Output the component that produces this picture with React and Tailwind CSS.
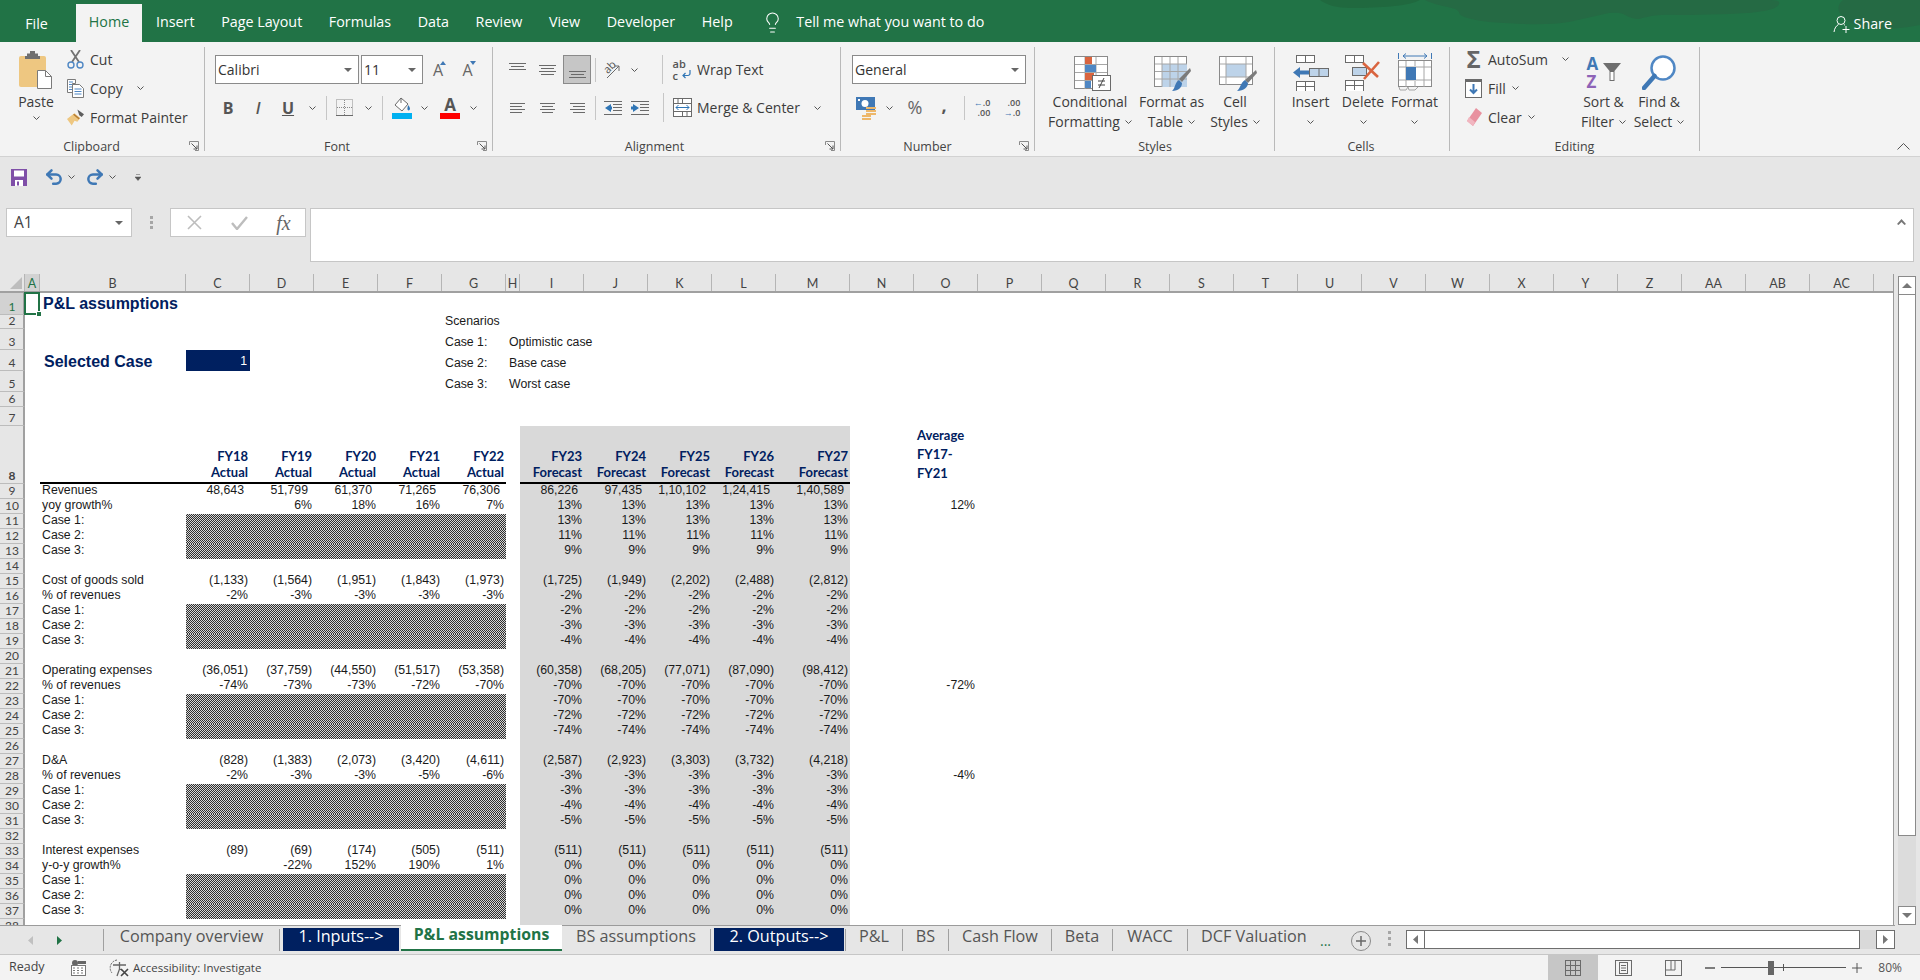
import React from "react";
import { Lightbulb, Undo2, Redo2 } from "lucide-react";

const Chev = ({ c = "#555" }) => (
  <svg width="7" height="4" viewBox="0 0 7 4" className="shrink-0"><path d="M.5.5l3 3 3-3" fill="none" stroke={c} /></svg>
);
const Launcher = () => (
  <svg width="10" height="10" viewBox="0 0 10 10" className="absolute right-[5px] bottom-[0px]">
    <path d="M.5 4V.5H9.5V9.5H6" fill="none" stroke="#8a8a8a" />
    <path d="M2.5 2.5L8 8M8 4.5V8H4.5" fill="none" stroke="#555" />
  </svg>
);
const Lines = ({ rows, w = 17, h = 14 }) => (
  <svg width={w} height={h} viewBox={`0 0 ${w} ${h}`}>
    {rows.map(([x1, x2, y], i) => (<path key={i} d={`M${x1} ${y + 0.5}H${x2}`} stroke="#6a6a6a" />))}
  </svg>
);
const Slot = ({ w, children }) => <div className={`flex items-center justify-center h-full shrink-0 ${w}`}>{children}</div>;
const VSep = () => <div className="w-px h-[24px] bg-[#c6c6c6]" />;
const Arrow = () => <svg width="8" height="4" viewBox="0 0 8 4"><path d="M0 0h8L4 4z" fill="#666" /></svg>;

const Combo = ({ w, text }) => (
  <div className={`h-[29px] bg-white border border-[#8a8a8a] flex items-center justify-between pl-[2px] pr-[6px] text-[14px] text-[#333] ${w}`}>
    <span>{text}</span><Arrow />
  </div>
);

const Small = ({ icon, label, chev }) => (
  <div className="flex items-center h-[26px]">
    <div className="w-[17px] flex justify-center shrink-0">{icon}</div>
    <span className="ml-[6px] whitespace-nowrap">{label}</span>
    {chev}
  </div>
);

const Group = ({ w, label, launcher, children }) => (
  <div className={`relative shrink-0 h-[104px] border-r border-[#b9b9b9] ${w}`}>
    <div className="h-[92px]">{children}</div>
    <div className="text-center text-[12.500px] leading-[15px] text-[#444] whitespace-nowrap">{label}</div>
    {launcher && <Launcher />}
  </div>
);

const Big = ({ w, icon, l1, l2 }) => (
  <div className={`flex flex-col items-center shrink-0 ${w}`}>
    <div className="h-[45px] flex items-center justify-center">{icon}</div>
    <div className="leading-[20px] whitespace-nowrap">{l1}</div>
    <div className="h-[20px] leading-[20px] whitespace-nowrap flex items-center gap-[5px]">{l2 && <span>{l2}</span>}<Chev /></div>
  </div>
);

/* ---- ribbon drawings ---- */
const PasteIcon = () => (
  <svg width="34" height="38" viewBox="0 0 34 38">
    <rect x="0" y="5" width="27" height="31" rx="2" fill="#eec781" />
    <path d="M8 5V2.5h3V0h5v2.5h3V5h2v3H6V5z" fill="#6f6f6f" />
    <path d="M18.5 19.5h8l6 6v12h-14z" fill="#fff" stroke="#7a7a7a" />
    <path d="M26.5 19.5v6h6" fill="none" stroke="#7a7a7a" />
  </svg>
);
const CutIcon = () => (
  <svg width="17" height="19" viewBox="0 0 17 19">
    <path d="M4 0l8 12M13 0L5 12" stroke="#727272" strokeWidth="1.8" fill="none" />
    <circle cx="4" cy="15" r="3" fill="none" stroke="#4f87c4" strokeWidth="1.4" />
    <circle cx="13" cy="15" r="3" fill="none" stroke="#4f87c4" strokeWidth="1.4" />
  </svg>
);
const CopyIcon = () => (
  <svg width="17" height="19" viewBox="0 0 17 19">
    <path d="M.5.5h8v4h-3v9H.5z" fill="#fff" stroke="#7a7a7a" />
    <path d="M2 3h4M2 5.5h3M2 8h3M2 10.5h3" stroke="#4f87c4" />
    <path d="M5.5 5.5h7l4 4v9h-11z" fill="#fff" stroke="#7a7a7a" />
    <path d="M7.5 10h7M7.5 12.5h7M7.5 15h7" stroke="#4f87c4" />
  </svg>
);
const PainterIcon = () => (
  <svg width="18" height="17" viewBox="0 0 18 17">
    <path d="M11 0l7 5-2.5 3L13 6z" fill="#5e5e5e" />
    <path d="M8 4l6 5-3 4-3-1-3 5-5-7 4-3z" fill="#eec781" />
    <path d="M7 5l6 5" stroke="#b57c32" strokeWidth="1.5" />
  </svg>
);
const BordersIcon = () => (
  <svg width="17" height="18" viewBox="0 0 17 18">
    <rect x=".5" y=".5" width="16" height="16" fill="none" stroke="#8a8a8a" strokeDasharray="1 1" />
    <path d="M8.5 1v16M1 8.5h15" stroke="#8a8a8a" strokeDasharray="1 1" />
    <path d="M0 16.5h17" stroke="#6a6a6a" />
  </svg>
);
const FillIcon = () => (
  <div className="flex flex-col items-center">
    <svg width="18" height="16" viewBox="0 0 18 16">
      <path d="M8 1l7 6-6 7-7-6z" fill="#fff" stroke="#6a6a6a" />
      <path d="M8 1v5" stroke="#6a6a6a" />
      <path d="M15 8c2 2 2.500 4 1.500 5s-2.500 0-2-2z" fill="#2f75b5" />
    </svg>
    <div className="w-[20px] h-[6px] bg-[#00b0f0]" />
  </div>
);
const OrientIcon = () => (
  <div className="relative w-[20px] h-[20px]">
    <span className="absolute left-[0px] top-[1px] text-[11px] leading-[12px] text-[#555] -rotate-45">ab</span>
    <svg width="20" height="20" viewBox="0 0 20 20" className="absolute left-0 top-0">
      <path d="M4 18L16 6M11 6h5v5" fill="none" stroke="#6a6a6a" />
    </svg>
  </div>
);
const IndentDec = () => (
  <svg width="18" height="14" viewBox="0 0 18 14">
    <path d="M0 .5h18M9 3.5h9M9 6.500h9M9 9.500h9M0 13.500h18" stroke="#6a6a6a" />
    <path d="M1 7l6-4v2.500H8v3H7V11z" fill="#2f75b5" />
  </svg>
);
const IndentInc = () => (
  <svg width="18" height="14" viewBox="0 0 18 14">
    <path d="M0 .5h18M9 3.500h9M9 6.500h9M9 9.500h9M0 13.500h18" stroke="#6a6a6a" />
    <path d="M8 7L2 3v2.500H0v3h2V11z" fill="#2f75b5" />
  </svg>
);
const WrapIcon = () => (
  <div className="relative w-[18px] h-[24px] text-[11px] leading-[12px] text-[#555] font-semibold">
    <div>ab</div>
    <div>c</div>
    <svg width="10" height="9" viewBox="0 0 10 9" className="absolute left-[8px] top-[12px]">
      <path d="M9 0v3.500a2 2 0 0 1-2 2H2M4.500 3L2 5.500 4.500 8" fill="none" stroke="#2f75b5" strokeWidth="1.2" />
    </svg>
  </div>
);
const MergeIcon = () => (
  <svg width="19" height="19" viewBox="0 0 19 19">
    <rect x=".5" y=".5" width="18" height="18" fill="#fff" stroke="#6a6a6a" />
    <path d="M1 5.500h17M1 13.500h17M9.500 1v4M9.500 14v4M5 1v4M14 14v4" stroke="#6a6a6a" />
    <path d="M3 9.500h13M5.500 7L3 9.500 5.500 12M13.500 7l2.500 2.500L13.500 12" fill="none" stroke="#2f75b5" />
  </svg>
);
const CurrencyIcon = () => (
  <svg width="21" height="24" viewBox="0 0 21 24">
    <rect x="0" y="1" width="19" height="13" fill="#3f78b5" />
    <ellipse cx="9" cy="7.500" rx="3.500" ry="3.500" fill="#fff" />
    <rect x="2" y="3" width="2" height="2" fill="#fff" />
    <path d="M10 12h10M10 15h10M10 18h10M6 20h9M6 23h9" stroke="#edb76a" strokeWidth="2" />
  </svg>
);
const CondIcon = () => (
  <svg width="37" height="35" viewBox="0 0 37 35">
    <rect x=".5" y=".5" width="33" height="32" fill="#fff" stroke="#8a8a8a" />
    <path d="M11 1v32M22 1v32M1 8.500h32M1 16.500h32M1 24.500h32" stroke="#a6a6a6" />
    <rect x="11" y="1" width="7" height="7" fill="#d9643f" />
    <rect x="11" y="9" width="11" height="7" fill="#4f87c4" />
    <rect x="11" y="17" width="9" height="7" fill="#d9643f" />
    <rect x="11" y="25" width="6" height="7" fill="#4f87c4" />
    <rect x="18.500" y="19.500" width="18" height="15" fill="#fff" stroke="#6a6a6a" />
    <path d="M24 25h7M24 29h7M30 22l-5 10" stroke="#444" fill="none" />
  </svg>
);
const TableIcon = () => (
  <svg width="37" height="35" viewBox="0 0 37 35">
    <rect x=".5" y=".5" width="32" height="30" fill="#fff" stroke="#8a8a8a" />
    <rect x="8" y="8" width="25" height="23" fill="#bdd3e9" />
    <path d="M8 1v30M16 1v30M24 1v30M1 8h32M1 15.500h32M1 23h32" stroke="#a6a6a6" />
    <path d="M36 12l1 3-9 11-3-3z" fill="#7b7b7b" />
    <path d="M25 24l3 3c0 4-3 8-10 8 3-2 3-9 7-11z" fill="#3f78b5" />
  </svg>
);
const StylesIcon = () => (
  <svg width="38" height="35" viewBox="0 0 38 35">
    <rect x=".5" y=".5" width="33" height="28" fill="#fff" stroke="#8a8a8a" />
    <rect x="7" y="8" width="20" height="13" fill="#bdd3e9" />
    <path d="M7 1v28M27 1v28M1 8h32M1 21h32" stroke="#a6a6a6" />
    <path d="M37 14l1 3-9 10-3-3z" fill="#7b7b7b" />
    <path d="M26 24l3 3c0 4-4 8-11 8 3-2 4-9 8-11z" fill="#3f78b5" />
  </svg>
);
const InsertIcon = () => (
  <svg width="36" height="36" viewBox="0 0 36 36">
    <rect x="3.500" y=".5" width="18" height="7" fill="#fff" stroke="#6a6a6a" />
    <path d="M12.500 1v7" stroke="#6a6a6a" />
    <rect x="16.500" y="13.500" width="19" height="8" fill="#bdd3e9" stroke="#6a6a6a" />
    <path d="M26 14v7" stroke="#6a6a6a" />
    <path d="M0 17.500L7 12v3.500h9v4H7V23z" fill="#3f78b5" />
    <rect x="3.500" y="26.500" width="18" height="15" fill="#fff" stroke="#6a6a6a" />
    <path d="M12.500 27v9M4 31.500h17" stroke="#6a6a6a" />
  </svg>
);
const DeleteIcon = () => (
  <svg width="36" height="36" viewBox="0 0 36 36">
    <rect x=".5" y=".5" width="18" height="7" fill="#fff" stroke="#6a6a6a" />
    <path d="M9.500 1v7" stroke="#6a6a6a" />
    <rect x="7.500" y="12.500" width="14" height="8" fill="#bdd3e9" stroke="#6a6a6a" />
    <rect x=".5" y="25.500" width="18" height="15" fill="#fff" stroke="#6a6a6a" />
    <path d="M9.500 26v9M1 30.500h17" stroke="#6a6a6a" />
    <path d="M18 8l15 14M34 7L19 24" stroke="#d9643f" strokeWidth="2.600" />
  </svg>
);
const FormatIcon = () => (
  <svg width="34" height="38" viewBox="0 0 34 38">
    <path d="M.5 0v6M33.500 0v6M5 3h24M8 .5L5 3l3 2.500M26 .5L29 3l-3 2.500" fill="none" stroke="#3f78b5" />
    <rect x=".5" y="7.500" width="33" height="26" fill="#fff" stroke="#8a8a8a" />
    <path d="M8 8v26M26 8v26M17 8v5M17 28v6M1 14h32M1 27h32" stroke="#a6a6a6" />
    <rect x="8" y="14" width="10" height="13" fill="#3f78b5" />
    <path d="M1 34l1 3h6l2-3 1 3h6l3-3" fill="none" stroke="#a6a6a6" />
  </svg>
);
const FillDown = () => (
  <svg width="17" height="19" viewBox="0 0 17 19">
    <rect x=".5" y=".5" width="16" height="18" fill="#fff" stroke="#6a6a6a" />
    <rect x="0" y="0" width="17" height="3" fill="#6a6a6a" />
    <path d="M8.500 5v9M5 10.500l3.500 3.500 3.500-3.500" fill="none" stroke="#3f78b5" strokeWidth="2" />
  </svg>
);
const Eraser = () => (
  <svg width="16" height="18" viewBox="0 0 16 18">
    <path d="M10 0l6 5-9 13-6-5z" fill="#e8919f" />
    <path d="M3 9l6 5-2 4-6-5z" fill="#f1b6c0" />
  </svg>
);
const SortIcon = () => (
  <div className="relative w-[34px] h-[36px] font-bold text-[17px] leading-[18px]">
    <div className="text-[#3f78b5]">A</div>
    <div className="text-[#8e63b7]">Z</div>
    <svg width="18" height="19" viewBox="0 0 18 19" className="absolute left-[16px] top-[8px]">
      <path d="M0 0h18l-6.500 8v10h-5V8z" fill="#6e6e6e" />
      <path d="M7.500 9v8h3V9z" fill="#fff" />
    </svg>
  </div>
);
const FindIcon = () => (
  <svg width="34" height="35" viewBox="0 0 34 35">
    <circle cx="21" cy="13" r="11.500" fill="#fff" stroke="#4f87c4" strokeWidth="2.500" />
    <path d="M12.500 21L2 33" stroke="#3f78b5" strokeWidth="4.500" strokeLinecap="round" />
  </svg>
);
const SaveIcon = () => (
  <svg width="16" height="17" viewBox="0 0 16 17">
    <path d="M0 0h16v17H0z" fill="#7f4fa8" />
    <rect x="3" y="1.500" width="10" height="6" fill="#fff" />
    <rect x="4" y="11" width="8" height="6" fill="#fff" />
    <rect x="6" y="12.500" width="2" height="4" fill="#7f4fa8" />
  </svg>
);

/* ---- ribbon ---- */
const TopTabs = () => (
  <div className="relative h-[42px] bg-[#217346] flex items-end text-[14.300px] text-white overflow-hidden shrink-0">
    <svg width="600" height="30" viewBox="0 0 600 30" className="absolute right-0 top-0">
      <path d="M0 0h100c-10 6-40 8-70 8-12 0-24-3-30-8z" fill="#20693f" />
      <path d="M105 0h340c10 0 15 0 14 4-3 7-25 9-50 10l-40 1c-20 0-30-2-50 4-15-1-12-8-30-6l-40 9c-20 3-40 3-80 0-20-3-30-5-30-10-4-6-18-4-34-12z" fill="#256a44" />
      <path d="M523 0h77v25c-20 4-50 6-65 0-15-8-22-17-12-25z" fill="#256a44" />
    </svg>
    <div className="relative flex items-end h-[38px] pb-[8px]">
      <div className="w-[76px] text-center pr-[3px]">File</div>
    </div>
    <div className="relative w-[66px] h-[38px] pb-[2px] bg-[#f3f3f3] text-[#217346] flex items-center justify-center">Home</div>
    <div className="relative flex items-center h-[38px] pb-[2px] pl-[14px]">
      {["Insert", "Page Layout", "Formulas", "Data", "Review", "View", "Developer", "Help"].map((t) => (
        <span key={t} className="mr-[26.600px] whitespace-nowrap">{t}</span>
      ))}
      <Lightbulb size={23} strokeWidth={1.1} className="mr-[12px] ml-[2px]" />
      <span className="whitespace-nowrap">Tell me what you want to do</span>
    </div>
    <div className="absolute right-[28px] top-[13px] flex items-center gap-[3px]">
      <svg width="18" height="18" viewBox="0 0 18 18">
        <circle cx="8" cy="5.500" r="4" fill="none" stroke="#fff" />
        <path d="M1 17c.5-4 2.500-6.500 4.500-7.500M11 9.500l1 .8M13 11v7M9.500 14.500h7" fill="none" stroke="#fff" />
      </svg>
      <span>Share</span>
    </div>
  </div>
);

const Ribbon = () => (
  <div className="relative h-[115px] shrink-0 bg-[#f3f3f3] border-b border-[#d2d2d2] flex pt-[5px] text-[14px] text-[#3c3c3c] font-['Open_Sans',sans-serif]">
    <Group w="w-[205px]" label={<span className="pr-[21px]">Clipboard</span>} launcher>
      <div className="flex">
        <div className="w-[67px] pl-[5px] flex flex-col items-center shrink-0">
          <div className="mt-[4px]"><PasteIcon /></div>
          <div className="mt-[3px] leading-[20px]">Paste</div>
          <div className="mt-[4px]"><Chev /></div>
        </div>
        <div className="flex flex-col gap-[3px] -mt-[1px]">
          <Small icon={<CutIcon />} label="Cut" />
          <Small icon={<CopyIcon />} label="Copy" chev={<span className="ml-[14px]"><Chev /></span>} />
          <Small icon={<PainterIcon />} label="Format Painter" />
        </div>
      </div>
    </Group>

    <Group w="w-[288px]" label={<span className="pr-[23px]">Font</span>} launcher>
      <div className="pt-[8px] flex flex-col gap-[9px]">
        <div className="flex items-center h-[29px] pl-[10px]">
          <Combo w="w-[144px]" text="Calibri" />
          <div className="w-[2px]" />
          <Combo w="w-[62px]" text="11" />
          <Slot w="w-[30px]"><span className="relative text-[16px] text-[#666]">A<svg width="6" height="4" viewBox="0 0 6 4" className="absolute -right-[3px] top-[3px]"><path d="M3 0l3 4H0z" fill="#3f78b5" /></svg></span></Slot>
          <Slot w="w-[29px]"><span className="relative text-[16px] text-[#666]">A<svg width="6" height="4" viewBox="0 0 6 4" className="absolute -right-[3px] top-[3px]"><path d="M0 0h6L3 4z" fill="#3f78b5" /></svg></span></Slot>
        </div>
        <div className="flex items-center h-[29px] pl-[8px]">
          <Slot w="w-[30px]"><span className="font-bold text-[16px] text-[#555]">B</span></Slot>
          <Slot w="w-[30px]"><span className="italic font-semibold text-[16px] text-[#555]">I</span></Slot>
          <Slot w="w-[30px]"><span className="underline font-bold text-[16px] text-[#555]">U</span></Slot>
          <Slot w="w-[18px]"><Chev /></Slot>
          <Slot w="w-[11px]"><VSep /></Slot>
          <Slot w="w-[24px]"><BordersIcon /></Slot>
          <Slot w="w-[24px]"><Chev /></Slot>
          <Slot w="w-[5px]"><VSep /></Slot>
          <Slot w="w-[34px]"><FillIcon /></Slot>
          <Slot w="w-[10px]"><Chev /></Slot>
          <Slot w="w-[42px]">
            <div className="flex flex-col items-center">
              <span className="font-bold text-[17px] leading-[17px] text-[#555]">A</span>
              <div className="w-[20px] h-[6px] bg-[#ff0000]" />
            </div>
          </Slot>
          <Slot w="w-[4px]"><Chev /></Slot>
        </div>
      </div>
    </Group>

    <Group w="w-[348px]" label={<span className="pr-[24px]">Alignment</span>} launcher>
      <div className="pt-[8px] flex flex-col gap-[9px]">
        <div className="flex items-center h-[29px] pl-[9px]">
          <Slot w="w-[30px]"><div className="-mt-[9px]"><Lines rows={[[0, 17, 2], [2, 15, 5], [0, 17, 8]]} h={9} /></div></Slot>
          <Slot w="w-[30px]"><Lines rows={[[0, 17, 1], [2, 15, 4], [0, 17, 7], [2, 15, 10]]} h={11} /></Slot>
          <div className="ml-[1px] w-[28px] h-[29px] bg-[#c6c6c6] border border-[#8a8a8a] flex items-end justify-center pb-[4px] shrink-0">
            <Lines rows={[[0, 17, 1], [2, 15, 4], [0, 17, 7]]} h={9} />
          </div>
          <Slot w="w-[8px]"><VSep /></Slot>
          <Slot w="w-[28px]"><OrientIcon /></Slot>
          <Slot w="w-[14px]"><Chev /></Slot>
          <div className="w-[21px] shrink-0" />
          <div className="w-px h-[29px] bg-[#c6c6c6] shrink-0" />
          <div className="w-[5px] shrink-0" />
          <Slot w="w-[27px]"><WrapIcon /></Slot>
          <span className="ml-[2px] whitespace-nowrap">Wrap Text</span>
        </div>
        <div className="flex items-center h-[29px] pl-[9px]">
          <Slot w="w-[30px]"><Lines rows={[[0, 15, 1], [0, 12, 4], [0, 15, 7], [0, 12, 10]]} w={15} h={11} /></Slot>
          <Slot w="w-[30px]"><Lines rows={[[0, 15, 1], [2, 13, 4], [0, 15, 7], [2, 13, 10]]} w={15} h={11} /></Slot>
          <Slot w="w-[30px]"><Lines rows={[[0, 15, 1], [3, 15, 4], [0, 15, 7], [3, 15, 10]]} w={15} h={11} /></Slot>
          <Slot w="w-[7px]"><VSep /></Slot>
          <Slot w="w-[28px]"><IndentDec /></Slot>
          <Slot w="w-[26px]"><IndentInc /></Slot>
          <div className="w-[10px] shrink-0" />
          <div className="w-px h-[29px] bg-[#c6c6c6] shrink-0" />
          <div className="w-[5px] shrink-0" />
          <Slot w="w-[27px]"><MergeIcon /></Slot>
          <span className="ml-px whitespace-nowrap">Merge &amp; Center</span>
          <span className="ml-[14px]"><Chev /></span>
        </div>
      </div>
    </Group>

    <Group w="w-[194px]" label={<span className="pr-[20px]">Number</span>} launcher>
      <div className="pt-[8px] flex flex-col gap-[9px]">
        <div className="flex items-center h-[29px] pl-[11px]"><Combo w="w-[174px]" text="General" /></div>
        <div className="flex items-center h-[29px] pl-[11px]">
          <Slot w="w-[28px]"><CurrencyIcon /></Slot>
          <Slot w="w-[18px]"><Chev /></Slot>
          <Slot w="w-[34px]"><span className="text-[18px] text-[#666]">%</span></Slot>
          <Slot w="w-[24px]"><span className="font-bold text-[18px] leading-[18px] -mt-[6px] text-[#555]">,</span></Slot>
          <Slot w="w-[16px]"><VSep /></Slot>
          <Slot w="w-[20px]">
            <div className="text-[9px] leading-[10px] font-semibold text-[#555] text-right"><div><span className="text-[#3f78b5]">←</span>.0</div><div>.00</div></div>
          </Slot>
          <Slot w="w-[40px]">
            <div className="text-[9px] leading-[10px] font-semibold text-[#555] text-right"><div>.00</div><div><span className="text-[#3f78b5]">→</span>.0</div></div>
          </Slot>
        </div>
      </div>
    </Group>

    <Group w="w-[240px]" label={<span className="pl-px">Styles</span>}>
      <div className="flex">
        <Big w="w-[110px]" icon={<div className="mt-[8px] ml-[4px]"><CondIcon /></div>} l1="Conditional" l2="Formatting" />
        <Big w="w-[53px]" icon={<div className="mt-[8px] ml-[2px]"><TableIcon /></div>} l1="Format as" l2="Table" />
        <Big w="w-[74px]" icon={<div className="mt-[8px] ml-[6px]"><StylesIcon /></div>} l1="Cell" l2="Styles" />
      </div>
    </Group>

    <Group w="w-[175px]" label={<span className="pr-[2px]">Cells</span>}>
      <div className="flex">
        <Big w="w-[71px]" icon={<div className="mt-[7px]"><InsertIcon /></div>} l1="Insert" />
        <Big w="w-[34px]" icon={<div className="mt-[7px]"><DeleteIcon /></div>} l1="Delete" />
        <Big w="w-[69px]" icon={<div className="mt-[5px]"><FormatIcon /></div>} l1="Format" />
      </div>
    </Group>

    <Group w="w-[250px]" label="Editing">
      <div className="flex">
        <div className="w-[125px] pl-[15px] flex flex-col gap-[3px] shrink-0 -mt-[1px]">
          <Small icon={<span className="font-bold text-[24px] leading-[24px] text-[#666]">Σ</span>} label="AutoSum" chev={<span className="ml-[14px]"><Chev /></span>} />
          <Small icon={<FillDown />} label="Fill" chev={<span className="ml-[6px]"><Chev /></span>} />
          <Small icon={<Eraser />} label="Clear" chev={<span className="ml-[6px]"><Chev /></span>} />
        </div>
        <Big w="w-[57px]" icon={<div className="mt-[6px]"><SortIcon /></div>} l1="Sort &" l2="Filter" />
        <Big w="w-[54px]" icon={<div className="mt-[5px]"><FindIcon /></div>} l1="Find &" l2="Select" />
      </div>
    </Group>

    <svg width="13" height="7" viewBox="0 0 13 7" className="absolute right-[10px] bottom-[6px]"><path d="M.5 6.500l6-6 6 6" fill="none" stroke="#555" /></svg>
  </div>
);

const FormulaArea = () => (
  <div className="h-[117px] shrink-0 bg-[#e6e6e6] font-['Open_Sans',sans-serif]">
    <div className="h-[40px] flex items-center pl-[11px]">
      <SaveIcon />
      <Undo2 size={20} strokeWidth={3} className="ml-[17px] text-[#3f78b5]" />
      <span className="ml-[4px]"><Chev /></span>
      <Redo2 size={20} strokeWidth={3} className="ml-[10px] text-[#3f78b5]" />
      <span className="ml-[4px]"><Chev /></span>
      <svg width="6" height="7" viewBox="0 0 6 7" className="ml-[19px]"><path d="M1 .5h4M0 3h6L3 6.500z" fill="#555" stroke="#555" strokeWidth=".5" /></svg>
    </div>
    <div className="mt-[11px] flex items-start pl-[6px]">
      <div className="w-[126px] h-[29px] bg-white border border-[#c6c6c6] flex items-center justify-between pl-[7px] pr-[8px] text-[15.500px] text-[#444] shrink-0">
        <span>A1</span><Arrow />
      </div>
      <div className="w-[38px] h-[29px] flex flex-col items-center justify-center gap-[2px] shrink-0 pl-[1px]">
        <i className="w-[3px] h-[3px] bg-[#a6a6a6]" /><i className="w-[3px] h-[3px] bg-[#a6a6a6]" /><i className="w-[3px] h-[3px] bg-[#a6a6a6]" />
      </div>
      <div className="w-[136px] h-[29px] bg-white border border-[#c6c6c6] flex items-center shrink-0">
        <Slot w="w-[46px]"><svg width="15" height="15" viewBox="0 0 15 15"><path d="M1 1l13 13M14 1L1 14" stroke="#bdbdbd" strokeWidth="1.600" /></svg></Slot>
        <Slot w="w-[45px]"><svg width="17" height="14" viewBox="0 0 17 14"><path d="M1 7l5 6L16 1" fill="none" stroke="#bdbdbd" strokeWidth="2.400" /></svg></Slot>
        <Slot w="w-[43px]"><span className="font-['Liberation_Serif',serif] italic text-[20px] text-[#666]">fx</span></Slot>
      </div>
      <div className="ml-[4px] w-[1604px] h-[54px] bg-white border border-[#c6c6c6] flex justify-end pt-[10px] pr-[7px] shrink-0">
        <svg width="9" height="6" viewBox="0 0 9 6"><path d="M0 5l4.500-5L9 5l-1.500 1L4.500 3 1.500 6z" fill="#777" /></svg>
      </div>
    </div>
  </div>
);

/* ---- sheet ---- */
const STD = "w-[64px]";
const HEADS = [
  ["A", "w-[15px]"], ["B", "w-[146px]"], ["C", STD], ["D", STD], ["E", STD], ["F", STD], ["G", STD], ["H", "w-[14px]"],
  ["I", STD], ["J", STD], ["K", STD], ["L", STD], ["M", "w-[74px]"], ["N", STD], ["O", STD], ["P", STD], ["Q", STD],
  ["R", STD], ["S", STD], ["T", STD], ["U", STD], ["V", STD], ["W", STD], ["X", STD], ["Y", STD], ["Z", STD],
  ["AA", STD], ["AB", STD], ["AC", STD],
];

const ColHeader = () => (
  <div className="flex h-[19px] border-b-2 border-[#a0a0a0] bg-[#e6e6e6] font-['Lato',sans-serif] text-[12.500px] text-[#444] shrink-0">
    <div className="w-[25px] shrink-0 border-r border-[#b5b5b5] flex items-end justify-end pr-[2px] pb-[2px]">
      <svg width="12" height="12" viewBox="0 0 12 12"><path d="M12 0v12H0z" fill="#bdbdbd" /></svg>
    </div>
    {HEADS.map(([h, w]) => (
      <div key={h} className={`shrink-0 flex items-center justify-center pt-[3px] border-r border-[#b5b5b5] ${w} ${h === "A" ? "bg-[#d2d2d2] text-[#217346]" : ""}`}>{h}</div>
    ))}
  </div>
);

const RowHead = ({ n }) => (
  <div className={`w-[25px] h-full shrink-0 flex items-end justify-center border-r-2 border-b border-r-[#a0a0a0] border-b-[#bcbcbc] font-['Lato',sans-serif] text-[12px] leading-[14px] pl-px ${n === 1 ? "bg-[#d2d2d2] text-[#217346]" : "bg-[#e6e6e6] text-[#444]"}`}>{n}</div>
);

const Num = ({ v, gray, last }) => {
  const paren = typeof v === "string" && (v.endsWith(")") || v.endsWith("%"));
  return (
    <div className={`h-full shrink-0 text-right ${last ? "w-[74px]" : "w-[64px]"} ${gray ? "bg-[#d9d9d9]" : ""} ${paren ? "pr-[2px]" : "pr-[6px]"}`}>{v}</div>
  );
};

const Hatch = () => (
  <div className="w-[320px] h-full shrink-0 bg-[repeating-conic-gradient(#2e2e2e_0_25%,#d6d6d6_0_50%)] bg-size-[2px_2px]" />
);

const Row = ({ n, label, actual, fc, avg, hatch }) => (
  <div className="flex h-[15px] shrink-0 leading-[13px]">
    <RowHead n={n} />
    <div className="w-[15px] shrink-0" />
    <div className="w-[146px] shrink-0 pl-[2px] whitespace-nowrap">{label}</div>
    {hatch ? <Hatch /> : (actual ? actual.map((v, i) => <Num key={i} v={v} />) : <div className="w-[320px] shrink-0" />)}
    <div className="w-[14px] shrink-0" />
    {(fc || ["", "", "", "", ""]).map((v, i) => <Num key={i} v={v} gray last={i === 4} />)}
    <div className="w-[64px] shrink-0" />
    {avg && <div className="w-[64px] shrink-0 text-right pr-[3px]">{avg}</div>}
  </div>
);

const five = (v) => [v, v, v, v, v];

const DATA = [
  { n: 9, label: "Revenues", actual: ["48,643", "51,799", "61,370", "71,265", "76,306"], fc: ["86,226", "97,435", "1,10,102", "1,24,415", "1,40,589"] },
  { n: 10, label: "yoy growth%", actual: ["", "6%", "18%", "16%", "7%"], fc: five("13%"), avg: "12%" },
  { n: 11, label: "Case 1:", hatch: true, fc: five("13%") },
  { n: 12, label: "Case 2:", hatch: true, fc: five("11%") },
  { n: 13, label: "Case 3:", hatch: true, fc: five("9%") },
  { n: 14 },
  { n: 15, label: "Cost of goods sold", actual: ["(1,133)", "(1,564)", "(1,951)", "(1,843)", "(1,973)"], fc: ["(1,725)", "(1,949)", "(2,202)", "(2,488)", "(2,812)"] },
  { n: 16, label: "% of revenues", actual: ["-2%", "-3%", "-3%", "-3%", "-3%"], fc: five("-2%") },
  { n: 17, label: "Case 1:", hatch: true, fc: five("-2%") },
  { n: 18, label: "Case 2:", hatch: true, fc: five("-3%") },
  { n: 19, label: "Case 3:", hatch: true, fc: five("-4%") },
  { n: 20 },
  { n: 21, label: "Operating expenses", actual: ["(36,051)", "(37,759)", "(44,550)", "(51,517)", "(53,358)"], fc: ["(60,358)", "(68,205)", "(77,071)", "(87,090)", "(98,412)"] },
  { n: 22, label: "% of revenues", actual: ["-74%", "-73%", "-73%", "-72%", "-70%"], fc: five("-70%"), avg: "-72%" },
  { n: 23, label: "Case 1:", hatch: true, fc: five("-70%") },
  { n: 24, label: "Case 2:", hatch: true, fc: five("-72%") },
  { n: 25, label: "Case 3:", hatch: true, fc: five("-74%") },
  { n: 26 },
  { n: 27, label: "D&A", actual: ["(828)", "(1,383)", "(2,073)", "(3,420)", "(4,611)"], fc: ["(2,587)", "(2,923)", "(3,303)", "(3,732)", "(4,218)"] },
  { n: 28, label: "% of revenues", actual: ["-2%", "-3%", "-3%", "-5%", "-6%"], fc: five("-3%"), avg: "-4%" },
  { n: 29, label: "Case 1:", hatch: true, fc: five("-3%") },
  { n: 30, label: "Case 2:", hatch: true, fc: five("-4%") },
  { n: 31, label: "Case 3:", hatch: true, fc: five("-5%") },
  { n: 32 },
  { n: 33, label: "Interest expenses", actual: ["(89)", "(69)", "(174)", "(505)", "(511)"], fc: five("(511)") },
  { n: 34, label: "y-o-y growth%", actual: ["", "-22%", "152%", "190%", "1%"], fc: five("0%") },
  { n: 35, label: "Case 1:", hatch: true, fc: five("0%") },
  { n: 36, label: "Case 2:", hatch: true, fc: five("0%") },
  { n: 37, label: "Case 3:", hatch: true, fc: five("0%") },
  { n: 38 },
];

const YEARS_A = ["FY18", "FY19", "FY20", "FY21", "FY22"];
const YEARS_F = ["FY23", "FY24", "FY25", "FY26", "FY27"];

const HeadCell = ({ y, t, w }) => (
  <div className={`shrink-0 h-full flex flex-col justify-end text-right pr-[2px] pb-[2px] leading-[16px] border-b-2 border-black ${w}`}>
    <div>{y}</div><div>{t}</div>
  </div>
);

const Sheet = () => (
  <div className="flex h-[651px] shrink-0 bg-[#e6e6e6]">
    <div className="relative w-[1894px] shrink-0 border-r border-[#9b9b9b] flex flex-col overflow-hidden bg-white font-['Liberation_Sans',sans-serif] text-[12.300px] text-[#1a1a1a]">
      <ColHeader />
      <div className="flex h-[22px] shrink-0">
        <RowHead n={1} />
        <div className="w-[15px] shrink-0" />
        <div className="pl-[3px] font-bold text-[16px] leading-[22px] text-[#002060] whitespace-nowrap">P&amp;L assumptions</div>
      </div>
      <div className="flex h-[14px] shrink-0 leading-[13px]">
        <RowHead n={2} />
        <div className="w-[417px] shrink-0" />
        <div className="pl-[3px]">Scenarios</div>
      </div>
      <div className="flex h-[21px] shrink-0 leading-[26px]">
        <RowHead n={3} />
        <div className="w-[417px] shrink-0" />
        <div className="w-[64px] pl-[3px] shrink-0">Case 1:</div>
        <div className="pl-[3px] whitespace-nowrap">Optimistic case</div>
      </div>
      <div className="flex h-[21px] shrink-0 leading-[26px]">
        <RowHead n={4} />
        <div className="w-[15px] shrink-0" />
        <div className="w-[146px] shrink-0 pl-[4px] font-bold text-[16px] leading-[23px] text-[#002060] whitespace-nowrap">Selected Case</div>
        <div className="w-[64px] shrink-0 bg-[#002060] text-white text-right pr-[3px] leading-[23px]">1</div>
        <div className="w-[192px] shrink-0" />
        <div className="w-[64px] pl-[3px] shrink-0">Case 2:</div>
        <div className="pl-[3px] whitespace-nowrap">Base case</div>
      </div>
      <div className="flex h-[21px] shrink-0 leading-[26px]">
        <RowHead n={5} />
        <div className="w-[417px] shrink-0" />
        <div className="w-[64px] pl-[3px] shrink-0">Case 3:</div>
        <div className="pl-[3px] whitespace-nowrap">Worst case</div>
      </div>
      <div className="flex h-[15px] shrink-0"><RowHead n={6} /></div>
      <div className="flex h-[19px] shrink-0"><RowHead n={7} /></div>
      <div className="flex h-[58px] shrink-0 font-['Lato',sans-serif] font-bold text-[13px] text-[#002060]">
        <RowHead n={8} />
        <div className="w-[15px] shrink-0" />
        <div className="w-[146px] shrink-0 border-b-2 border-black" />
        {YEARS_A.map((y) => <HeadCell key={y} y={y} t="Actual" w="w-[64px]" />)}
        <div className="w-[14px] shrink-0" />
        {YEARS_F.map((y, i) => <div key={y} className="bg-[#d9d9d9] h-full"><HeadCell y={y} t="Forecast" w={i === 4 ? "w-[74px]" : "w-[64px]"} /></div>)}
        <div className="w-[64px] shrink-0" />
        <div className="pl-[3px] leading-[19px] whitespace-nowrap">
          <div>Average</div><div>FY17-</div><div>FY21</div>
        </div>
      </div>
      {DATA.map((r) => <Row key={r.n} {...r} />)}
      <div className="absolute left-[24px] top-[18px] w-[16px] h-[23px] border-2 border-[#217346]">
        <div className="absolute -right-[3px] -bottom-[3px] w-[5px] h-[5px] bg-[#217346] border-t border-l border-white" />
      </div>
    </div>
    <div className="w-[26px] shrink-0 pl-[4px] pt-[2px] flex flex-col">
      <div className="w-[18px] h-[19px] bg-white border border-[#8a8a8a] flex items-center justify-center"><svg width="10" height="5" viewBox="0 0 10 5"><path d="M5 0l5 5H0z" fill="#777" /></svg></div>
      <div className="w-[18px] h-[541px] bg-white border-x border-b border-[#8a8a8a]" />
      <div className="w-[18px] h-[70px] bg-[#dcdcdc]" />
      <div className="w-[18px] h-[19px] bg-white border border-[#8a8a8a] flex items-center justify-center"><svg width="10" height="5" viewBox="0 0 10 5"><path d="M0 0h10L5 5z" fill="#777" /></svg></div>
    </div>
  </div>
);

/* ---- tabs ---- */
const Tab = ({ w, children }) => (
  <div className={`h-[22px] mt-[3px] pb-[8px] shrink-0 flex items-center justify-center text-[16.200px] text-[#555] border-r border-[#a0a0a0] whitespace-nowrap ${w}`}>{children}</div>
);

const SheetTabs = () => (
  <div className="h-[29px] shrink-0 bg-[#e6e6e6] flex items-start font-['Open_Sans',sans-serif]">
    <div className="w-[1406px] h-full shrink-0 flex border-t border-[#9b9b9b]">
      <div className="w-[104px] h-[22px] mt-[3px] shrink-0 flex items-center border-r border-[#a0a0a0] pl-[28px] gap-[24px]">
        <svg width="5" height="9" viewBox="0 0 5 9"><path d="M5 0v9L0 4.500z" fill="#c0c0c0" /></svg>
        <svg width="5" height="9" viewBox="0 0 5 9"><path d="M0 0v9l5-4.500z" fill="#217346" /></svg>
      </div>
      <Tab w="w-[176px]">Company overview</Tab>
      <div className="w-[3px] shrink-0" />
      <div className="w-[116px] h-[23px] mt-[2px] pb-[7px] bg-[#002060] text-white text-[16.200px] flex items-center justify-center shrink-0 whitespace-nowrap">1. Inputs--&gt;</div>
      <div className="w-[2px] shrink-0" />
      <div className="w-[161px] h-[26px] -mt-px pb-[5px] bg-white border-b-2 border-[#217346] text-[#217346] font-bold text-[15.800px] flex items-center justify-center shrink-0 whitespace-nowrap">P&amp;L assumptions</div>
      <Tab w="w-[149px]">BS assumptions</Tab>
      <div className="w-[3px] shrink-0" />
      <div className="w-[130px] h-[23px] mt-[2px] pb-[7px] bg-[#002060] text-white text-[16.200px] flex items-center justify-center shrink-0 whitespace-nowrap">2. Outputs--&gt;</div>
      <div className="w-[2px] shrink-0 h-[22px] mt-[3px] border-r border-[#a0a0a0]" />
      <Tab w="w-[57px]">P&amp;L</Tab>
      <Tab w="w-[46px]">BS</Tab>
      <Tab w="w-[103px]">Cash Flow</Tab>
      <Tab w="w-[61px]">Beta</Tab>
      <Tab w="w-[75px]">WACC</Tab>
      <div className="w-[132px] h-[22px] mt-[3px] pb-[8px] shrink-0 flex items-center pl-[13px] text-[16.200px] text-[#555] whitespace-nowrap">DCF Valuation</div>
      <div className="w-[20px] mt-[3px] h-[22px] shrink-0 flex items-center text-[#217346] text-[14px]">...</div>
      <div className="w-[20px] h-[20px] mt-[5px] shrink-0 ml-[11px] rounded-full border border-[#8a8a8a] flex items-center justify-center">
        <svg width="10" height="10" viewBox="0 0 10 10"><path d="M5 0v10M0 5h10" stroke="#6a6a6a" strokeWidth="1.500" /></svg>
      </div>
      <div className="ml-[17px] mt-[5px] flex flex-col gap-[3px] shrink-0"><i className="w-[3px] h-[3px] bg-[#a6a6a6]" /><i className="w-[3px] h-[3px] bg-[#a6a6a6]" /><i className="w-[3px] h-[3px] bg-[#a6a6a6]" /></div>
    </div>
    <div className="w-[489px] h-full shrink-0 border-t border-[#9b9b9b] pt-[4px] flex">
      <div className="w-[19px] h-[19px] bg-white border border-[#6e6e6e] flex items-center justify-center"><svg width="5" height="9" viewBox="0 0 5 9"><path d="M5 0v9L0 4.500z" fill="#777" /></svg></div>
      <div className="w-[435px] h-[19px] bg-white border-y border-r border-[#6e6e6e]" />
      <div className="w-[16px] h-[19px] bg-[#d9d9d9]" />
      <div className="w-[19px] h-[19px] bg-white border border-[#6e6e6e] flex items-center justify-center"><svg width="5" height="9" viewBox="0 0 5 9"><path d="M0 0v9l5-4.500z" fill="#777" /></svg></div>
    </div>
  </div>
);

const StatusBar = () => (
  <div className="h-[26px] shrink-0 bg-[#f3f3f3] border-t border-[#c6c6c6] flex items-center font-['Open_Sans',sans-serif] text-[12.500px] text-[#444]">
    <span className="ml-[9px] w-[62px] shrink-0">Ready</span>
    <svg width="15" height="16" viewBox="0 0 15 16" className="shrink-0">
      <circle cx="4" cy="3" r="3" fill="#666" />
      <rect x="7" y="1" width="8" height="3" fill="#666" />
      <rect x=".5" y="5.500" width="14" height="10" fill="#fff" stroke="#777" />
      <path d="M2 8h2M6 8h2M10 8h2M2 10.500h2M6 10.500h2M10 10.500h2M2 13h2M6 13h2M10 13h2" stroke="#777" />
    </svg>
    <svg width="22" height="18" viewBox="0 0 22 18" className="ml-[23px] shrink-0">
      <path d="M8 1a8 8 0 0 0-5 13" fill="none" stroke="#666" strokeDasharray="2 1" />
      <path d="M4 6h13M10.500 3v7M8 17l2.500-7 2.500 1" fill="none" stroke="#666" strokeWidth="1.300" />
      <path d="M12 10l7 7M19 10l-7 7" stroke="#444" strokeWidth="1.600" />
    </svg>
    <span className="ml-[2px] text-[11.500px] whitespace-nowrap">Accessibility: Investigate</span>
    <div className="ml-auto flex items-center h-full">
      <div className="w-[50px] h-full bg-[#c6c6c6] flex items-center justify-center">
        <svg width="16" height="16" viewBox="0 0 16 16"><rect x=".5" y=".5" width="15" height="15" fill="none" stroke="#6a6a6a" /><path d="M5.500 1v14M10.500 1v14M1 5.500h14M1 10.500h14" stroke="#6a6a6a" /></svg>
      </div>
      <div className="w-[50px] flex justify-center">
        <svg width="17" height="16" viewBox="0 0 17 16"><rect x=".5" y=".5" width="16" height="15" fill="none" stroke="#6a6a6a" /><rect x="4.500" y="2.500" width="8" height="11" fill="none" stroke="#6a6a6a" /><path d="M6 5.500h5M6 8h5M6 10.500h5" stroke="#6a6a6a" /></svg>
      </div>
      <div className="w-[50px] flex justify-center">
        <svg width="17" height="16" viewBox="0 0 17 16"><rect x=".5" y=".5" width="16" height="15" fill="none" stroke="#6a6a6a" /><path d="M1 10h9V1M6 1v9" fill="none" stroke="#6a6a6a" /></svg>
      </div>
      <svg width="10" height="2" viewBox="0 0 10 2" className="ml-[7px]"><path d="M0 1h10" stroke="#555" strokeWidth="1.500" /></svg>
      <div className="relative ml-[6px] w-[125px] h-px bg-[#555] flex items-center">
        <div className="absolute left-[47px] w-[6px] h-[14px] bg-[#666]" />
        <div className="absolute left-[62px] w-px h-[7px] bg-[#555]" />
      </div>
      <svg width="10" height="10" viewBox="0 0 10 10" className="ml-[6px]"><path d="M5 0v10M0 5h10" stroke="#555" /></svg>
      <span className="ml-[16px] mr-[18px] text-[12px] text-[#555]">80%</span>
    </div>
  </div>
);

export default function App() {
  return (
    <div className="w-[1920px] h-[980px] overflow-hidden flex flex-col bg-[#e6e6e6] font-['Open_Sans',sans-serif]">
      <TopTabs />
      <Ribbon />
      <FormulaArea />
      <Sheet />
      <SheetTabs />
      <StatusBar />
    </div>
  );
}
